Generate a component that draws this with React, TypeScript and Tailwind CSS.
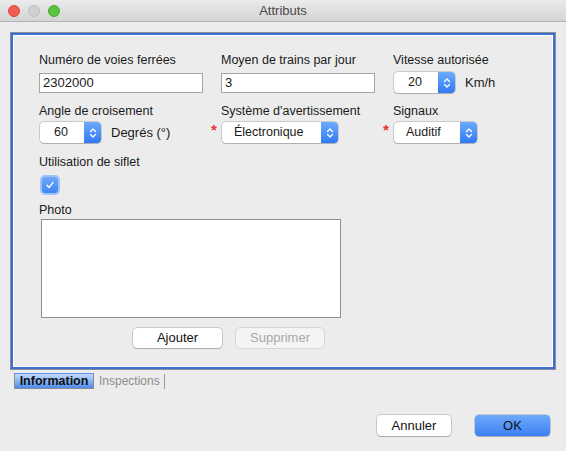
import React from "react";

function Chevrons() {
  return (
    <svg width="8" height="12" viewBox="0 0 8 12" fill="none" stroke="white" strokeWidth="1.3" strokeLinecap="round" strokeLinejoin="round">
      <path d="M1.5 4.5 L4 2 L6.5 4.5" />
      <path d="M1.5 7.5 L4 10 L6.5 7.5" />
    </svg>
  );
}

function Stepper({ value }: { value: string }) {
  return (
    <div className="flex h-[21px] w-[61px] overflow-hidden rounded-[4px] bg-white shadow-[0_0_0_0.5px_rgba(0,0,0,0.28),0_1px_1px_rgba(0,0,0,0.15)]">
      <div className="flex flex-1 items-center justify-center pr-[2px]">{value}</div>
      <div className="flex w-[17px] items-center justify-center bg-gradient-to-b from-[#6cabfa] to-[#3079f4]">
        <Chevrons />
      </div>
    </div>
  );
}

function Select({ value, w }: { value: string; w: string }) {
  return (
    <div className={`flex h-[21px] overflow-hidden rounded-[4px] bg-white shadow-[0_0_0_0.5px_rgba(0,0,0,0.28),0_1px_1px_rgba(0,0,0,0.15)] ${w}`}>
      <div className="flex flex-1 items-center pl-[12px]">{value}</div>
      <div className="flex w-[17px] items-center justify-center bg-gradient-to-b from-[#6cabfa] to-[#3079f4]">
        <Chevrons />
      </div>
    </div>
  );
}

function Star() {
  return <span className="absolute left-[-11px] top-[-3px] text-[15px] font-bold text-[#e8332a]">*</span>;
}

function Label({ children }: { children: React.ReactNode }) {
  return <div className="h-[16px] leading-[16px] whitespace-nowrap">{children}</div>;
}

export default function App() {
  return (
    <div className="flex h-[451px] w-[566px] flex-col overflow-hidden bg-[#ececec] font-['Liberation_Sans',Arial,sans-serif] text-[12.5px] text-[#1a1a1a]">
      {/* title bar */}
      <div className="relative flex h-[22px] shrink-0 items-center justify-center border-b border-[#b3b3b3] bg-gradient-to-b from-[#ebebeb] to-[#d4d4d4]">
        <div className="absolute left-[8px] top-[5px] flex gap-[8px]">
          <span className="h-[12px] w-[12px] rounded-full border border-[#d9473f] bg-[#f05c52]" />
          <span className="h-[12px] w-[12px] rounded-full border border-[#bdbdbd] bg-[#d0d0d0]" />
          <span className="h-[12px] w-[12px] rounded-full border border-[#47a935] bg-[#5ac43f]" />
        </div>
        <span className="text-[13px] text-[#4a4a4a]">Attributs</span>
      </div>

      {/* panel */}
      <div className="px-[10px] pt-[10px]">
        <div className="h-[338px] w-[546px] border border-[#8c8c94]">
          <div className="h-full border-2 border-[#3d6fd9]">
            <div className="h-full border border-white pl-[25px] pt-[16px]">
              <div className="grid grid-cols-[182px_172px_1fr]">
                <div>
                  <Label>Numéro de voies ferrées</Label>
                  <div className="mt-[5px] flex h-[20px] w-[164px] items-center border border-[#a6a6a6] bg-white pl-[3px] text-[13px]">2302000</div>
                </div>
                <div>
                  <Label>Moyen de trains par jour</Label>
                  <div className="mt-[5px] flex h-[20px] w-[154px] items-center border border-[#a6a6a6] bg-white pl-[3px] text-[13px]">3</div>
                </div>
                <div>
                  <Label>Vitesse autorisée</Label>
                  <div className="ml-[1px] mt-[4px] flex items-center">
                    <Stepper value="20" />
                    <span className="ml-[10px] text-[13px]">Km/h</span>
                  </div>
                </div>

                <div className="mt-[10px]">
                  <Label>Angle de croisement</Label>
                  <div className="ml-[1px] mt-[3px] flex items-center">
                    <Stepper value="60" />
                    <span className="ml-[10px] text-[13px]">Degrés (°)</span>
                  </div>
                </div>
                <div className="mt-[10px]">
                  <Label>Système d'avertissement</Label>
                  <div className="relative ml-[1px] mt-[3px]">
                    <Star />
                    <Select value="Électronique" w="w-[116px]" />
                  </div>
                </div>
                <div className="mt-[10px]">
                  <Label>Signaux</Label>
                  <div className="relative ml-[1px] mt-[3px]">
                    <Star />
                    <Select value="Auditif" w="w-[83px]" />
                  </div>
                </div>
              </div>

              <div className="mt-[11px]">
                <Label>Utilisation de siflet</Label>
                <div className="ml-[3px] mt-[7px] flex h-[16px] w-[16px] items-center justify-center rounded-[3px] bg-gradient-to-b from-[#6ea9f7] to-[#3f86f2] shadow-[0_0_0_2px_#9cc3f7]">
                  <svg width="10" height="10" viewBox="0 0 10 10" fill="none" stroke="white" strokeWidth="1.4" strokeLinecap="round" strokeLinejoin="round">
                    <path d="M2 5.3 L4.1 7.6 L8 2.4" />
                  </svg>
                </div>
              </div>

              <div className="mt-[9px]">
                <Label>Photo</Label>
                <div className="ml-[2px] mt-[1px] h-[99px] w-[300px] border border-[#8f8f8f] bg-white" />
              </div>

              <div className="ml-[94px] mt-[10px] flex gap-[14px]">
                <button className="h-[20px] w-[89px] rounded-[4px] bg-white text-[13px] text-[#111] shadow-[0_0_0_0.5px_rgba(0,0,0,0.3),0_1px_1px_rgba(0,0,0,0.15)]">Ajouter</button>
                <button className="h-[20px] w-[88px] rounded-[4px] bg-[#f4f4f4] text-[13px] text-[#a8a8a8] shadow-[0_0_0_0.5px_rgba(0,0,0,0.18)]">Supprimer</button>
              </div>
            </div>
          </div>
        </div>
      </div>

      {/* tabs */}
      <div className="ml-[14px] mt-[3px] flex h-[16px] items-stretch">
        <div className="flex w-[80px] items-center justify-center border border-[#8d8d8d] border-t-[#5b8fe6] bg-gradient-to-b from-[#c4dafb] to-[#4d8cee] text-[12.5px] font-bold text-[#111]">
          Information
        </div>
        <div className="ml-[5px] flex items-center text-[12px] text-[#8c8c8c]">Inspections</div>
        <div className="ml-[4px] mt-[1px] w-px bg-[#9a9a9a]" />
      </div>

      {/* footer */}
      <div className="mt-[26px] flex justify-end gap-[24px] pr-[16px]">
        <button className="h-[21px] w-[74px] rounded-[4px] bg-white text-[13px] text-[#111] shadow-[0_0_0_0.5px_rgba(0,0,0,0.3),0_1px_1px_rgba(0,0,0,0.15)]">Annuler</button>
        <button className="h-[21px] w-[75px] rounded-[4px] bg-gradient-to-b from-[#6eaafa] to-[#3b80f5] text-[13px] text-[#111] shadow-[0_0_0_0.5px_rgba(0,0,80,0.3),0_1px_1px_rgba(0,0,0,0.15)]">OK</button>
      </div>
    </div>
  );
}
